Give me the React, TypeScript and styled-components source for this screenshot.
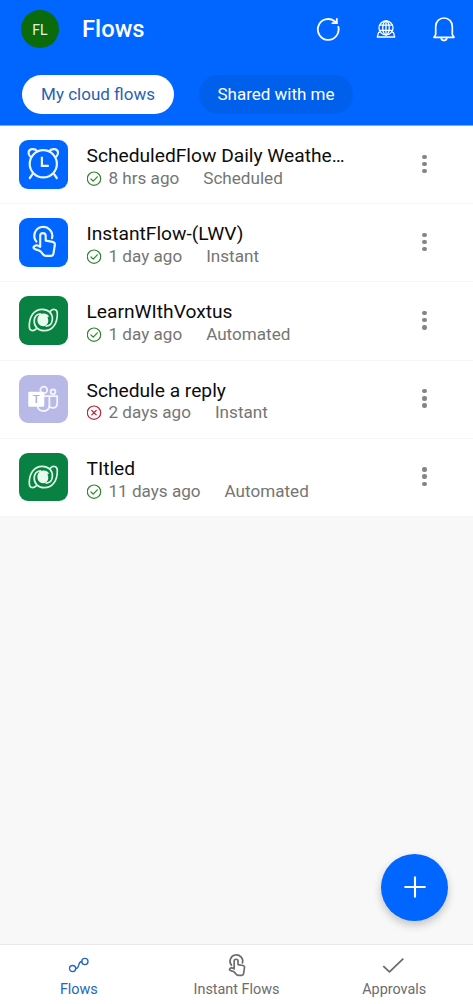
import React from "react";
import styled, { createGlobalStyle } from "styled-components";

const GlobalStyle = createGlobalStyle`
  * { box-sizing: border-box; }
  body { margin: 0; background: #f8f8f8; font-family: Roboto, "Noto Sans", sans-serif; }
  svg { display: block; flex: none; }
`;

const Screen = styled.div`
  position: relative;
  display: flex;
  flex-direction: column;
  width: 473px;
  height: 1004px;
  overflow: hidden;
  background: #f8f8f8;
`;

const Header = styled.header`
  flex: none;
  height: 126px;
  background: #0066ff;
  border-bottom: 1px solid #7eabf5;
  color: #fff;
`;

const TitleBar = styled.div`
  display: flex;
  align-items: center;
  height: 58px;
  padding: 0 17px 0 21px;
`;

const Avatar = styled.div`
  display: flex;
  align-items: center;
  justify-content: center;
  width: 38px;
  height: 38px;
  border-radius: 50%;
  background: #0b6a0b;
  color: #e6f5e6;
  font-size: 14px;
  line-height: 38px;
  padding-top: 2px;
`;

const PageTitle = styled.h1`
  flex: 1;
  margin: 0 0 0 23px;
  font-size: 23.8px;
  font-weight: 500;
  line-height: 28px;
`;

const Actions = styled.div`
  display: flex;
  align-items: center;
  gap: 34px;
`;

const Tabs = styled.div`
  display: flex;
  gap: 25px;
  padding: 17px 0 0 22px;
`;

const Tab = styled.button<{ $active?: boolean; $width: number }>`
  width: ${(p) => p.$width}px;
  height: 39px;
  padding: 0 0 2px;
  border: 0;
  border-radius: 20px;
  background: ${(p) => (p.$active ? "#fff" : "#005feb")};
  color: ${(p) => (p.$active ? "#2b5fb4" : "#fff")};
  font: 400 17px Roboto, sans-serif;
  white-space: nowrap;
`;

const List = styled.main`
  flex: 1;
`;

const Row = styled.div`
  display: flex;
  height: 78.2px;
  padding: 14px 41.5px 0 19px;
  background: #fff;
  border-bottom: 1px solid #f5f5f5;
`;

const Tile = styled.div<{ $color: string }>`
  flex: none;
  width: 48.5px;
  height: 48.5px;
  border-radius: 9px;
  overflow: hidden;
  background: ${(p) => p.$color};
`;

const RowText = styled.div`
  flex: 1;
  min-width: 0;
  padding: 4px 0 0 19px;
`;

const RowTitle = styled.div`
  color: #0c0c0c;
  font-size: 19.2px;
  line-height: 24px;
  white-space: nowrap;
`;

const Meta = styled.div`
  display: flex;
  align-items: center;
  margin-top: -0.2px;
  color: #757575;
  font-size: 17.1px;
  line-height: 21px;
  white-space: nowrap;
`;

const Age = styled.span`
  margin: 0 24px 0 7px;
`;

const Dots = styled.div`
  display: flex;
  flex-direction: column;
  gap: 2.8px;
  padding: 14.5px 5px 0;
`;

const Dot = styled.i`
  width: 4.4px;
  height: 4.4px;
  border-radius: 50%;
  background: #858585;
`;

const AddButton = styled.button`
  position: absolute;
  right: 25px;
  bottom: 83.5px;
  display: flex;
  align-items: center;
  justify-content: center;
  width: 67px;
  height: 67px;
  padding: 0;
  border: 0;
  border-radius: 50%;
  background: #0066ff;
  box-shadow: 0 4px 9px rgba(0, 0, 0, 0.22);
`;

const Nav = styled.nav`
  flex: none;
  display: flex;
  height: 60px;
  background: #fff;
  border-top: 1px solid #e9e9e9;
`;

const NavItem = styled.div<{ $active?: boolean }>`
  flex: 1;
  display: flex;
  flex-direction: column;
  align-items: center;
  padding-top: 8px;
  color: ${(p) => (p.$active ? "#2266c4" : "#6c6c6c")};
  font-size: 14.4px;
  line-height: 18px;
  gap: 4px;
`;

const line = {
  fill: "none",
  stroke: "currentColor",
  strokeLinecap: "round" as const,
  strokeLinejoin: "round" as const,
};

const RefreshIcon = () => (
  <svg width="24" height="24" viewBox="0 0 24 24" {...line} strokeWidth="1.8">
    <path d="M22.3 9.8A10.4 10.4 0 1 1 18.6 4.2L20.8 6" />
    <path d="M20.8 1.8V6.2H16.4" />
  </svg>
);

const GlobeIcon = () => (
  <svg width="24" height="24" viewBox="0 0 24 24" {...line} strokeWidth="1.3">
    <circle cx="12" cy="10.9" r="7" />
    <ellipse cx="12" cy="10.9" rx="3.3" ry="7" />
    <path d="M5.8 8.2H18.2M5.8 13.4H18.2M12 3.9V18" />
    <path d="M5.3 15.4H4.6L3.3 20H20.7L19.4 15.4H18.7" />
  </svg>
);

const BellIcon = () => (
  <svg width="24" height="26" viewBox="0 0 24 26" {...line} strokeWidth="1.7">
    <path d="M3.7 18.6V10.5C3.7 5.5 7.3 2 12 2S20.3 5.5 20.3 10.5V18.6L22 21.3H2Z" />
    <path d="M9.2 21.6C9.2 25.6 14.8 25.6 14.8 21.6" />
  </svg>
);

const ClockArt = () => (
  <svg width="48.5" height="48.5" viewBox="0 0 48.5 48.5" {...line} stroke="#e9f6ff" strokeWidth="2.2">
    <circle cx="24.3" cy="23.8" r="13.6" />
    <path d="M22.9 16.8V25.8H29.8" strokeLinecap="butt" strokeLinejoin="miter" />
    <path d="M11 16.4C8.6 13.6 9.2 9.8 12.8 9.2C15 8.9 17 9.5 18.2 11.1" />
    <path d="M37.6 16.4C40 13.6 39.4 9.8 35.8 9.2C33.6 8.9 31.6 9.5 30.4 11.1" />
    <path d="M13.5 34.1L10.8 38M35.1 34.1L37.8 38" />
  </svg>
);

const TouchPaths = () => (
  <>
    <path d="M17.4 23.6A9 9 0 1 1 33 20.2" />
    <path d="M21.2 28.8V17.8A2.7 2.7 0 0 1 26.7 17.8V22.6L33.6 23.9C35.3 24.3 36 25.3 35.8 27L34.5 35.4C34.2 37 33.3 37.8 31.8 37.8H27C25.6 37.8 24.8 37.4 24 36.3L21.8 33.6C21 32.8 19.6 32.2 17.3 31.6C15.3 31.1 14.5 30.6 14.5 29.3C15.5 27 18.6 26.6 21.2 28.8Z" />
  </>
);

const TouchArt = () => (
  <svg width="48.5" height="48.5" viewBox="0 0 48.5 48.5" {...line} stroke="#e9f6ff" strokeWidth="2.2">
    <TouchPaths />
  </svg>
);

const lobe =
  "M17.2 32.8C14.6 35.6 10.4 35.2 10.3 30.4C10.1 20.6 14.8 13.3 23.4 13.3C29.6 13.3 33.6 17.8 33.4 23C33.2 27.4 30.6 30 27.2 30.2";

const DataverseArt = () => (
  <svg width="48.5" height="48.5" viewBox="0 0 48.5 48.5" {...line} stroke="#dcf5e4" strokeWidth="1.7">
    <path d={lobe} />
    <path d={lobe} transform="rotate(180 24.3 24)" />
    <path
      d="M18.4 24.5C18.2 20.6 20.4 17.8 24 17.4C27.2 17.2 29.6 18.8 30.4 21.2C29.2 20.4 28.2 20.8 28.8 22.2C30.2 25.8 28.4 29.8 24.6 30.2C21.2 30.4 18.6 28 18.4 24.5Z"
      fill="#e9faef"
      stroke="none"
    />
  </svg>
);

const TileLetter = styled.text`
  font: 500 11.5px Roboto, sans-serif;
  fill: #b0b0d6;
  stroke: none;
`;

const TeamsArt = () => (
  <svg width="48.5" height="48.5" viewBox="0 0 48.5 48.5" {...line} stroke="#f4f5ff" strokeWidth="1.8">
    <circle cx="24.8" cy="15" r="3.4" />
    <circle cx="34" cy="16.7" r="2.4" />
    <path d="M18.6 32C19.4 34.6 21.6 36 24.6 36C28.2 36 30.4 33.8 30.4 30.3V21.2H25" />
    <path d="M30.4 21.2H38.2V28.4C38.2 31.4 36.3 33 33.4 32.8C32.2 32.7 31.2 32.4 30.4 31.8" />
    <rect x="9.3" y="16.7" width="16" height="15" rx="1.2" fill="#fff" stroke="none" />
    <TileLetter x="17.3" y="28.4" textAnchor="middle">T</TileLetter>
  </svg>
);

const StatusIcon = ({ ok }: { ok: boolean }) => (
  <svg width="15" height="15" viewBox="0.5 0 15 15" {...line} stroke={ok ? "#2d862f" : "#bd2437"} strokeWidth="1.2">
    <circle cx="7.5" cy="7.7" r="6.7" />
    <path d={ok ? "M4.5 8L6.7 10.1L10.8 5.8" : "M5.3 5.5L9.7 9.9M9.7 5.5L5.3 9.9"} />
  </svg>
);

const PlusIcon = () => (
  <svg width="24" height="24" viewBox="0 0 24 24" {...line} stroke="#fff" strokeWidth="2.1" strokeLinecap="butt">
    <path d="M12 1.4V22.6M1.4 12H22.6" />
  </svg>
);

const FlowIcon = () => (
  <svg width="24" height="24" viewBox="0 0 24 24" {...line} strokeWidth="1.3">
    <circle cx="5.6" cy="15.6" r="3.1" />
    <circle cx="17.9" cy="8.5" r="3.1" />
    <path d="M8.7 15.6C13.3 15.6 10.2 8.5 14.8 8.5" />
  </svg>
);

const TouchIcon = () => (
  <svg width="24" height="24" viewBox="8.2 6.2 34 34" {...line} strokeWidth="2.4">
    <TouchPaths />
  </svg>
);

const CheckIcon = () => (
  <svg width="24" height="24" viewBox="0 0 24 24" {...line} strokeWidth="1.8" strokeLinecap="butt">
    <path d="M1.3 13.1L7.5 18.9L21.3 5.7" />
  </svg>
);

type Flow = {
  title: string;
  age: string;
  kind: string;
  ok: boolean;
  color: string;
  Art: () => React.JSX.Element;
};

const flows: Flow[] = [
  { title: "ScheduledFlow Daily Weathe…", age: "8 hrs ago", kind: "Scheduled", ok: true, color: "#0066ff", Art: ClockArt },
  { title: "InstantFlow-(LWV)", age: "1 day ago", kind: "Instant", ok: true, color: "#0066ff", Art: TouchArt },
  { title: "LearnWIthVoxtus", age: "1 day ago", kind: "Automated", ok: true, color: "#088142", Art: DataverseArt },
  { title: "Schedule a reply", age: "2 days ago", kind: "Instant", ok: false, color: "#b8b9e6", Art: TeamsArt },
  { title: "TItled", age: "11 days ago", kind: "Automated", ok: true, color: "#088142", Art: DataverseArt },
];

export default function App() {
  return (
    <Screen>
      <GlobalStyle />
      <Header>
        <TitleBar>
          <Avatar>FL</Avatar>
          <PageTitle>Flows</PageTitle>
          <Actions>
            <RefreshIcon />
            <GlobeIcon />
            <BellIcon />
          </Actions>
        </TitleBar>
        <Tabs>
          <Tab $active $width={152}>My cloud flows</Tab>
          <Tab $width={154}>Shared with me</Tab>
        </Tabs>
      </Header>
      <List>
        {flows.map(({ title, age, kind, ok, color, Art }) => (
          <Row key={title}>
            <Tile $color={color}><Art /></Tile>
            <RowText>
              <RowTitle>{title}</RowTitle>
              <Meta>
                <StatusIcon ok={ok} />
                <Age>{age}</Age>
                <span>{kind}</span>
              </Meta>
            </RowText>
            <Dots><Dot /><Dot /><Dot /></Dots>
          </Row>
        ))}
      </List>
      <AddButton aria-label="Add"><PlusIcon /></AddButton>
      <Nav>
        <NavItem $active><FlowIcon />Flows</NavItem>
        <NavItem><TouchIcon />Instant Flows</NavItem>
        <NavItem><CheckIcon />Approvals</NavItem>
      </Nav>
    </Screen>
  );
}
